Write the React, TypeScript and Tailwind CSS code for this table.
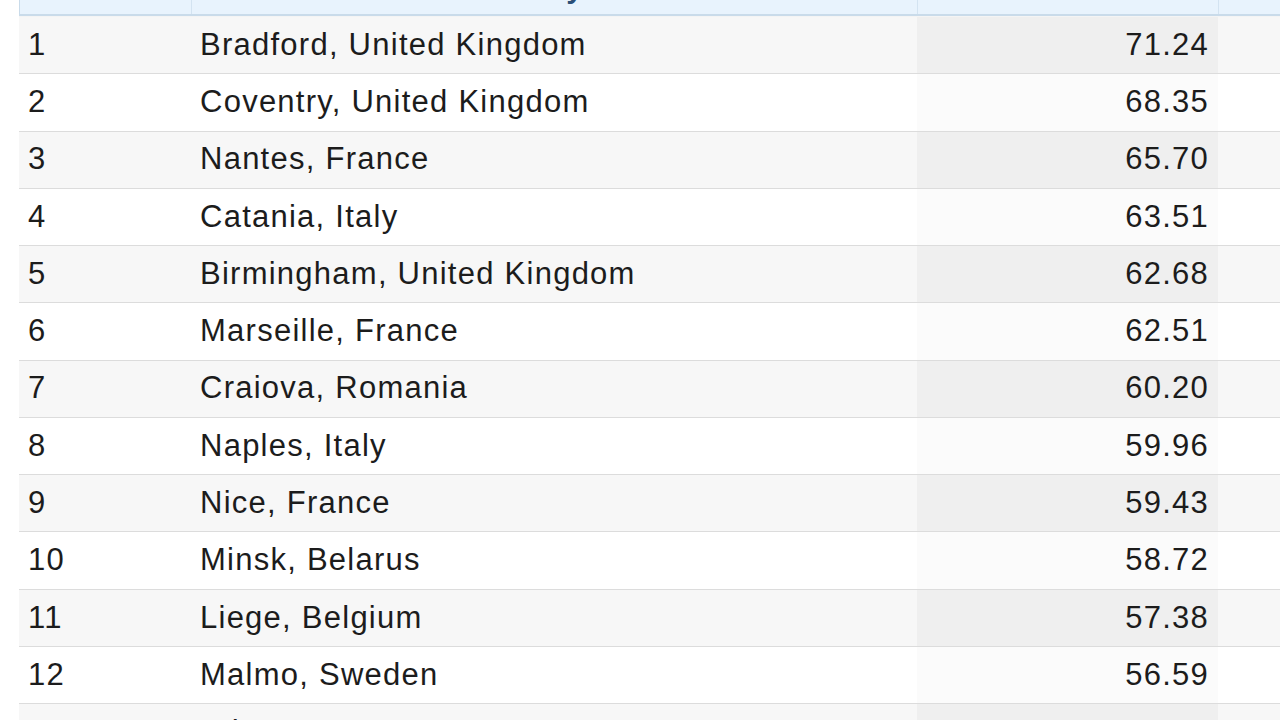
import React from "react";

interface Row {
    rank: number;
    city: string;
    index: string;
}

const rows: Row[] = [
    { rank: 1, city: "Bradford, United Kingdom", index: "71.24" },
    { rank: 2, city: "Coventry, United Kingdom", index: "68.35" },
    { rank: 3, city: "Nantes, France", index: "65.70" },
    { rank: 4, city: "Catania, Italy", index: "63.51" },
    { rank: 5, city: "Birmingham, United Kingdom", index: "62.68" },
    { rank: 6, city: "Marseille, France", index: "62.51" },
    { rank: 7, city: "Craiova, Romania", index: "60.20" },
    { rank: 8, city: "Naples, Italy", index: "59.96" },
    { rank: 9, city: "Nice, France", index: "59.43" },
    { rank: 10, city: "Minsk, Belarus", index: "58.72" },
    { rank: 11, city: "Liege, Belgium", index: "57.38" },
    { rank: 12, city: "Malmo, Sweden", index: "56.59" },
    { rank: 13, city: "Athens, Greece", index: "56.42" },
];

export default function App() {
    return (
        <div
            className="h-[720px] w-[1280px] overflow-hidden bg-white pl-[19px] text-[#1c1c1c]"
            style={{ fontFamily: '"Liberation Sans", Arial, sans-serif' }}
        >
            <div className="w-[1500px]">
                {/* header, scrolled mostly out of view */}
                <div className="-mt-[41px] grid h-[57px] grid-cols-[172px_726px_301px_301px] grid-rows-[55px] overflow-hidden whitespace-nowrap border-b-2 border-l border-[#c9dbea] bg-[#e8f3fd] text-[30px] font-bold leading-none text-[#2b4f78]">
                    <div className="flex items-end justify-center overflow-hidden border-r border-[#d3e3f1] pb-[11px]">Rank</div>
                    <div className="flex items-end justify-center overflow-hidden border-r border-[#d3e3f1] pb-[11px]">City</div>
                    <div className="flex items-end justify-center overflow-hidden border-r border-[#d3e3f1] pb-[11px]">Crime Index</div>
                    <div className="flex items-end justify-center overflow-hidden pb-[11px]">Safety Index</div>
                </div>
                <div className="h-px bg-[#f4f4f4]" />

                {rows.map((r) => {
                    const odd = r.rank % 2 === 1;
                    return (
                        <div
                            key={r.rank}
                            className={`grid h-[57.27px] grid-cols-[172px_726px_301px_301px] border-b-[1.5px] border-[#dcdcdc] text-[31px] tracking-[1.25px] ${
                                odd ? "bg-[#f7f7f7]" : "bg-white"
                            }`}
                        >
                            <div className="flex items-center pl-[9px]">{r.rank}</div>
                            <div className="flex items-center pl-[9px]">{r.city}</div>
                            <div
                                className={`flex items-center justify-end pr-[9px] ${
                                    odd ? "bg-[#efefef]" : "bg-[#fbfbfb]"
                                }`}
                            >
                                {r.index}
                            </div>
                            <div />
                        </div>
                    );
                })}
            </div>
        </div>
    );
}
